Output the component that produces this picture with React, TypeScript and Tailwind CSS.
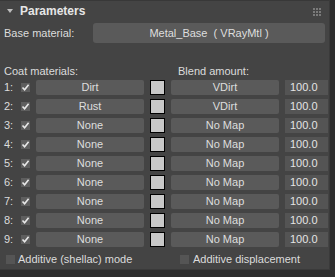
import React from "react";

const rows = [
  { n: "1:", mat: "Dirt", blend: "VDirt" },
  { n: "2:", mat: "Rust", blend: "VDirt" },
  { n: "3:", mat: "None", blend: "No Map" },
  { n: "4:", mat: "None", blend: "No Map" },
  { n: "5:", mat: "None", blend: "No Map" },
  { n: "6:", mat: "None", blend: "No Map" },
  { n: "7:", mat: "None", blend: "No Map" },
  { n: "8:", mat: "None", blend: "No Map" },
  { n: "9:", mat: "None", blend: "No Map" },
];

function Check({ checked }: { checked: boolean }) {
  return (
    <div className="w-[9px] h-[9px] bg-[#5e5e5e] flex items-center justify-center shrink-0">
      {checked && (
        <svg width="9" height="9" viewBox="0 0 9 9">
          <path d="M1.5 4.5 L3.6 6.8 L7.6 1.8" stroke="#e8e8e8" strokeWidth="1.6" fill="none" />
        </svg>
      )}
    </div>
  );
}

export default function App() {
  return (
    <div
      className="w-[335px] h-[277px] bg-[#2e2e2e] text-[#dcdcdc] text-[11px] leading-[13px] overflow-hidden"
      style={{ fontFamily: '"Liberation Sans", Arial, sans-serif' }}
    >
      <div className="w-[330px] h-[270px] bg-[#444444] border-r border-b border-[#3a3a3a] flex flex-col relative">
        {/* header */}
        <div className="h-[22px] flex items-center pl-[7px] border-t border-[#383838]">
          <svg width="6" height="5" viewBox="0 0 6 5" className="mr-[7px]">
            <path d="M0 0 L6 0 L3 4 Z" fill="#bdbdbd" />
          </svg>
          <span className="text-[12px] font-bold text-[#e6e6e6]">Parameters</span>
          <div className="absolute right-[8px] top-[8px] grid grid-cols-3 gap-[1px]">
            {Array.from({ length: 9 }).map((_, i) => (
              <div key={i} className="w-[2px] h-[2px] bg-[#7a7a7a]" />
            ))}
          </div>
        </div>
        {/* base material */}
        <div className="flex items-center h-[20px] mt-[1px]">
          <span className="pl-[4px] w-[93px]">Base material:</span>
          <div className="w-[232px] h-[20px] rounded-[3px] bg-[#5a5a5a] flex items-center justify-center text-[#dedede]">
            Metal_Base&nbsp; ( VRayMtl )
          </div>
        </div>
        {/* labels */}
        <div className="flex items-center mt-[22px] h-[13px]">
          <span className="pl-[4px] w-[178px]">Coat materials:</span>
          <span>Blend amount:</span>
        </div>
        {/* rows */}
        <div className="flex flex-col gap-[4px] mt-[2px]">
          {rows.map((r) => (
            <div key={r.n} className="flex items-center h-[15px]">
              <span className="pl-[4px] w-[21px]">{r.n}</span>
              <Check checked />
              <div className="ml-[6px] w-[108px] h-[15px] rounded-[2px] bg-[#5a5a5a] flex items-center justify-center text-[#dedede]">
                {r.mat}
              </div>
              <div className="ml-[6px] w-[15px] h-[15px] border border-black bg-[#c8c8c8]" />
              <div className="ml-[6px] w-[108px] h-[15px] rounded-[2px] bg-[#5a5a5a] flex items-center justify-center text-[#dedede]">
                {r.blend}
              </div>
              <div className="ml-[6px] w-[43px] h-[15px] bg-[#545454] flex items-center pl-[5px] text-[#e4e4e4]">
                100.0
              </div>
            </div>
          ))}
        </div>
        {/* bottom checks */}
        <div className="flex items-center mt-[6px] h-[13px]">
          <div className="pl-[6px] w-[180px] flex items-center">
            <div className="w-[9px] h-[9px] bg-[#555555]" />
            <span className="ml-[3px]">Additive (shellac) mode</span>
          </div>
          <div className="flex items-center">
            <div className="w-[9px] h-[9px] bg-[#555555]" />
            <span className="ml-[4px]">Additive displacement</span>
          </div>
        </div>
      </div>
    </div>
  );
}
